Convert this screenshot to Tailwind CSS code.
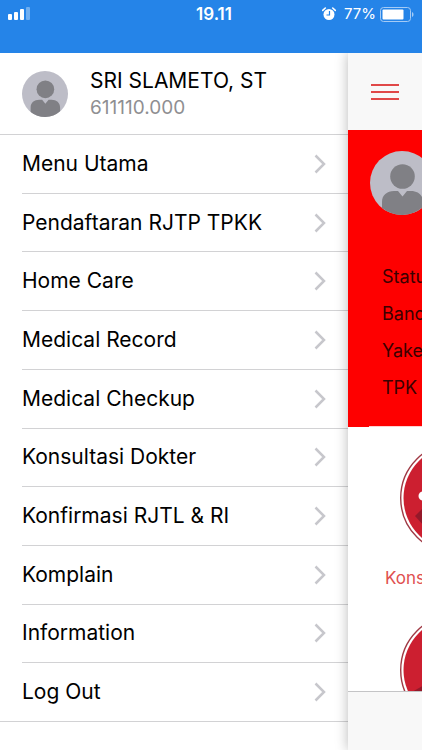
<!DOCTYPE html>
<html lang="id">
<head>
<meta charset="utf-8">
<meta name="viewport" content="width=device-width, initial-scale=1">
<title>Menu</title>
<script src="https://cdn.jsdelivr.net/npm/@tailwindcss/browser@4"></script>
</head>
<body class="flex h-screen flex-col overflow-hidden bg-white font-['Inter','Liberation_Sans',sans-serif] text-black">
<svg class="hidden">
  <symbol id="avatar" viewBox="0 0 64 64">
    <circle cx="32" cy="32" r="32" fill="#bdbdc7"/>
    <circle cx="32.500" cy="25.500" r="12.300" fill="#808085"/>
    <path d="M12 57V51c0-7 5-11 12-11h4l4.500 5.500 4.500-5.500h4c7 0 12 4 12 11v5a32 32 0 0 1-41 1z" fill="#808085"/>
  </symbol>
  <symbol id="chevron" viewBox="0 0 12 20">
    <path d="M1.500 1.500 10 10l-8.500 8.500" fill="none" stroke="#c7c7cc" stroke-width="2.500"/>
  </symbol>
</svg>

<header class="relative z-20 grid h-[53px] shrink-0 grid-cols-3 items-start bg-[#2584e8] px-2 pt-1 text-white">
  <svg class="mt-[3px] h-[13px] w-[22px]" viewBox="0 0 22 13" fill="#fff" role="img" aria-label="Signal">
    <rect x="0" y="7" width="4" height="6" rx="1"/><rect x="6" y="5" width="4" height="8" rx="1"/><rect x="12" y="2" width="4" height="11" rx="1"/><rect x="18" y="0" width="4" height="13" rx="1" opacity=".35"/>
  </svg>
  <span class="pl-1.5 text-center text-[17px] leading-5 font-semibold">19.11</span>
  <span class="flex items-center justify-end gap-1">
    <svg class="mr-1 h-3.5 w-3.5 shrink-0" viewBox="0 0 14 14" role="img" aria-label="Alarm">
      <circle cx="7" cy="7.500" r="5.500" fill="#fff"/><path d="M.7 3.400 3.300 1M13.300 3.400 10.700 1" stroke="#fff" stroke-width="1.600" stroke-linecap="round"/><path d="M7.500 4v4H4.500" fill="none" stroke="#2584e8" stroke-width="1.200"/>
    </svg>
    <span class="text-[15px] leading-5">77%</span>
    <svg class="h-[15px] w-[34px] shrink-0" viewBox="0 0 34 15" role="img" aria-label="Baterai">
      <rect x=".5" y=".5" width="30" height="14" rx="3" fill="none" stroke="#a5cbf5"/><rect x="2.500" y="2.500" width="21" height="10" rx="1" fill="#fff"/><path d="M32 5v5c2-.8 2-4.200 0-5z" fill="#a5cbf5"/>
    </svg>
  </span>
</header>

<div class="flex min-h-0 flex-1">
  <nav class="flex w-[348px] shrink-0 flex-col pb-7" aria-label="Menu">
    <div class="flex h-[82px] shrink-0 items-center gap-[22px] border-b border-[#d2d2d4] pl-[22px]">
      <svg class="h-[46px] w-[46px]" role="img" aria-label="Foto profil"><use href="#avatar"/></svg>
      <div>
        <p class="text-[21px] leading-7">SRI SLAMETO, ST</p>
        <p class="text-[19px] leading-[26px] text-[#8f8f92]">611110.000</p>
      </div>
    </div>
    <ul class="flex flex-1 flex-col border-b border-[#d2d2d4] pl-[22px] text-[21px] leading-7">
      <li class="flex flex-1 border-b border-[#d2d2d4]"><a href="#" class="flex flex-1 items-center justify-between pr-[22px]">Menu Utama<svg class="h-5 w-3"><use href="#chevron"/></svg></a></li>
      <li class="flex flex-1 border-b border-[#d2d2d4]"><a href="#" class="flex flex-1 items-center justify-between pr-[22px]">Pendaftaran RJTP TPKK<svg class="h-5 w-3"><use href="#chevron"/></svg></a></li>
      <li class="flex flex-1 border-b border-[#d2d2d4]"><a href="#" class="flex flex-1 items-center justify-between pr-[22px]">Home Care<svg class="h-5 w-3"><use href="#chevron"/></svg></a></li>
      <li class="flex flex-1 border-b border-[#d2d2d4]"><a href="#" class="flex flex-1 items-center justify-between pr-[22px]">Medical Record<svg class="h-5 w-3"><use href="#chevron"/></svg></a></li>
      <li class="flex flex-1 border-b border-[#d2d2d4]"><a href="#" class="flex flex-1 items-center justify-between pr-[22px]">Medical Checkup<svg class="h-5 w-3"><use href="#chevron"/></svg></a></li>
      <li class="flex flex-1 border-b border-[#d2d2d4]"><a href="#" class="flex flex-1 items-center justify-between pr-[22px]">Konsultasi Dokter<svg class="h-5 w-3"><use href="#chevron"/></svg></a></li>
      <li class="flex flex-1 border-b border-[#d2d2d4]"><a href="#" class="flex flex-1 items-center justify-between pr-[22px]">Konfirmasi RJTL &amp; RI<svg class="h-5 w-3"><use href="#chevron"/></svg></a></li>
      <li class="flex flex-1 border-b border-[#d2d2d4]"><a href="#" class="flex flex-1 items-center justify-between pr-[22px]">Komplain<svg class="h-5 w-3"><use href="#chevron"/></svg></a></li>
      <li class="flex flex-1 border-b border-[#d2d2d4]"><a href="#" class="flex flex-1 items-center justify-between pr-[22px]">Information<svg class="h-5 w-3"><use href="#chevron"/></svg></a></li>
      <li class="flex flex-1"><a href="#" class="flex flex-1 items-center justify-between pr-[22px]">Log Out<svg class="h-5 w-3"><use href="#chevron"/></svg></a></li>
    </ul>
  </nav>

  <main class="z-10 flex min-w-0 flex-1 flex-col overflow-hidden bg-white shadow-[0_0_12px_rgba(0,0,0,0.28)]">
    <div class="flex h-[77px] shrink-0 items-center bg-[#f8f8f8] pl-[23px]">
      <button type="button" aria-label="Buka menu">
        <svg class="h-[18px] w-7" viewBox="0 0 28 18" stroke="#e04848" stroke-width="2"><path d="M0 2h28M0 9h28M0 16h28"/></svg>
      </button>
    </div>
    <section class="flex h-[297px] shrink-0 flex-col bg-[#fe0000] pt-[21px]">
      <svg class="ml-[22px] h-16 w-16 shrink-0" role="img" aria-label="Foto profil"><use href="#avatar"/></svg>
      <div class="mt-[43px] pl-[34px] text-lg leading-[37px] text-[#3a0000]">
        <p>Statu</p><p>Banc</p><p>Yake</p><p>TPK</p>
      </div>
      <div class="mt-auto ml-[21px] h-px shrink-0 bg-[#ffd0d0]"></div>
    </section>
    <section class="min-h-0 flex-1 overflow-hidden pt-[15px]">
      <a href="#" class="block">
        <svg class="ml-[52px] h-28 w-28" viewBox="0 0 112 112">
          <circle cx="56" cy="56" r="55.300" fill="#fff" stroke="#a03a45" stroke-width="1.400"/><circle cx="56" cy="56" r="52.500" fill="#cc1f30"/>
          <path d="M15 74l8-8 12 12-10 7z" fill="#94192a"/><circle cx="23" cy="54" r="4.500" fill="#fff"/>
        </svg>
        <span class="mt-3 block pl-[37px] text-[17px] leading-6 text-[#df5050]">Kons</span>
      </a>
      <a href="#" class="mt-6 block">
        <svg class="ml-[52px] h-28 w-28" viewBox="0 0 112 112">
          <circle cx="56" cy="56" r="55.300" fill="#fff" stroke="#a03a45" stroke-width="1.400"/><circle cx="56" cy="56" r="52.500" fill="#cc1f30"/>
          <path d="M12 78l12-7v12z" fill="#94192a"/>
        </svg>
      </a>
    </section>
    <div class="h-[59px] shrink-0 border-t border-[#c4c4c6] bg-[#f8f8f8]"></div>
  </main>
</div>
</body>
</html>
